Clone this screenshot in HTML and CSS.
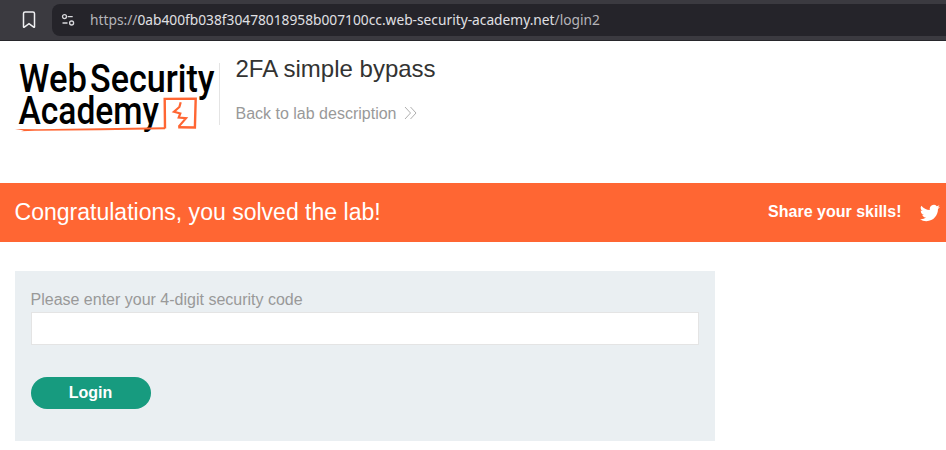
FILE: index.html
```html
<!DOCTYPE html>
<html lang="en">
<head>
<meta charset="utf-8">
<title>2FA simple bypass</title>
<link rel="stylesheet" href="styles.css">
</head>
<body>
<div class="browser-bar">
  <svg class="bookmark" width="14" height="18" viewBox="0 0 14 18"><path d="M1.5 15.8V2.6Q1.5 1 3.1 1h7.8q1.6 0 1.6 1.6v13.2q0 .9-.8.3L7 12.7l-4.700 3.400q-.8.6-.8-.3z"/></svg>
  <div class="address">
    <svg class="tune" width="14" height="14" viewBox="0 0 14 14"><circle cx="3.500" cy="3.600" r="2"/><path d="M6.700 3.600h5M1.500 10h5"/><circle cx="10.600" cy="10" r="2"/></svg>
    <div class="url">https://<span>0ab400fb038f30478018958b007100cc.web-security-academy.net</span>/login2</div>
  </div>
</div>
<header class="lab-header">
  <svg class="logo" width="204" height="72" viewBox="15 62 204 72">
    <g class="logo-text">
      <text x="19" y="91.500" textLength="68" lengthAdjust="spacingAndGlyphs">Web</text>
      <text x="90" y="91.500" textLength="124.500" lengthAdjust="spacingAndGlyphs">Security</text>
      <text x="18.500" y="124" textLength="140.500" lengthAdjust="spacingAndGlyphs">Academy</text>
    </g>
    <path class="underline" d="M15 129l23 .2 62-.9 65-1.100v2L100 130.200l-65 .5-14 .6 3-.8z"/>
    <path class="frame" d="M165 128.500L164.700 98.900l31-.3-.8 28.900-16.700-.3"/>
    <path class="bolt" d="M180.700 102.200l-1.300 4.800-5.400 4.700 6.300 1.700-1.600 4.200 7.300.6-7.300 8.400"/>
  </svg>
  <div class="title">
    <h1>2FA simple bypass</h1>
    <a>Back to lab description<svg class="chevrons" width="13" height="14" viewBox="0 0 13 14"><path d="M1 1l5.500 6L1 13M6.500 1l5.500 6-5.500 6"/></svg></a>
  </div>
</header>
<section class="banner">
  <div class="solved">Congratulations, you solved the lab!</div>
  <div class="share">Share your skills!</div>
  <svg class="bird" width="20" height="18" viewBox="0 2 24 20"><path d="M23.950 4.570a10 10 0 0 1-2.820.78 4.960 4.960 0 0 0 2.160-2.730c-.95.560-2 .96-3.130 1.180a4.920 4.920 0 0 0-8.380 4.480C7.690 8.100 4.070 6.130 1.640 3.160a4.920 4.920 0 0 0 1.520 6.570 4.900 4.900 0 0 1-2.230-.61v.06a4.920 4.920 0 0 0 3.950 4.830 5 5 0 0 1-2.210.08 4.940 4.940 0 0 0 4.600 3.420A9.870 9.870 0 0 1 0 19.540a14 14 0 0 0 7.550 2.210c9.050 0 14-7.500 14-13.980 0-.21 0-.42-.02-.63a9.940 9.940 0 0 0 2.420-2.570z"/></svg>
</section>
<form class="login">
  <label for="code">Please enter your 4-digit security code</label>
  <input id="code" type="text">
  <button type="button">Login</button>
</form>
</body>
</html>
```
FILE: styles.css
```css
* { box-sizing: border-box; }
body {
  margin: 0;
  height: 450px;
  overflow: hidden;
  background: #fff;
  font: 16px/20px "Liberation Sans", Arial, sans-serif;
}
.browser-bar {
  display: flex;
  height: 41px;
  padding: 4px 0 0 22px;
  background: #3b3a40;
  border-bottom: 1px solid #27262b;
}
.bookmark {
  margin: 7px 16px 0 0;
  fill: none;
  stroke: #f0f0f2;
  stroke-width: 1.5;
}
.address {
  display: flex;
  align-items: center;
  flex: 1;
  height: 32px;
  padding-left: 9px;
  background: #25242a;
  border-radius: 8px 0 0 8px;
}
.tune {
  margin-right: 15px;
  fill: none;
  stroke: #d8d8dc;
  stroke-width: 1.3;
}
.url {
  font: 13.75px/20px "Noto Sans", sans-serif;
  color: #b5b4b9;
  white-space: nowrap;
}
.url span { color: #e0e0e4; }
.lab-header {
  display: flex;
  height: 142px;
  padding: 21px 15px 0;
}
.logo { overflow: visible; }
.logo-text {
  font: 500 38px Roboto, sans-serif;
  fill: #000;
}
.underline { fill: #ff6633; }
.frame, .bolt {
  fill: none;
  stroke: #ff6633;
  stroke-width: 2.4;
}
.bolt { stroke-width: 2.2; }
.title {
  height: 62px;
  margin-top: 1px;
  padding-left: 15.500px;
  border-left: 1px solid #e4e4e4;
}
h1 {
  margin: -8px 0 18px;
  font-size: 24px;
  line-height: 28px;
  font-weight: 400;
  color: #333332;
}
.title a {
  display: flex;
  align-items: center;
  padding-top: 3px;
  color: #999;
}
.chevrons {
  margin: -2px 0 0 7.500px;
  fill: none;
  stroke: #999;
  stroke-width: 0.8;
}
.banner {
  display: flex;
  align-items: center;
  height: 59px;
  padding: 0 6px 2px 14.500px;
  background: #ff6633;
  color: #fff;
}
.solved { flex: 1; font-size: 23.040px; line-height: 28px; }
.share { font-weight: 700; }
.bird { margin: 3px 0 0 18.500px; fill: #fff; }
.login {
  display: flex;
  flex-direction: column;
  align-items: flex-start;
  width: 700px;
  height: 170px;
  margin: 29px 0 0 15px;
  padding: 19px 16px 0;
  background: #eaeff2;
}
label { height: 22px; margin-left: -0.5px; color: #999; }
input {
  width: 668px;
  height: 33px;
  border: 1px solid #e4e4e4;
  background: #fff;
}
button {
  width: 120px;
  height: 32px;
  margin-top: 32px;
  padding: 0 1px 0 0;
  border: 0;
  border-radius: 16px;
  background: #179b7f;
  color: #fff;
  font: 700 16px/20px "Liberation Sans", Arial, sans-serif;
}
```
